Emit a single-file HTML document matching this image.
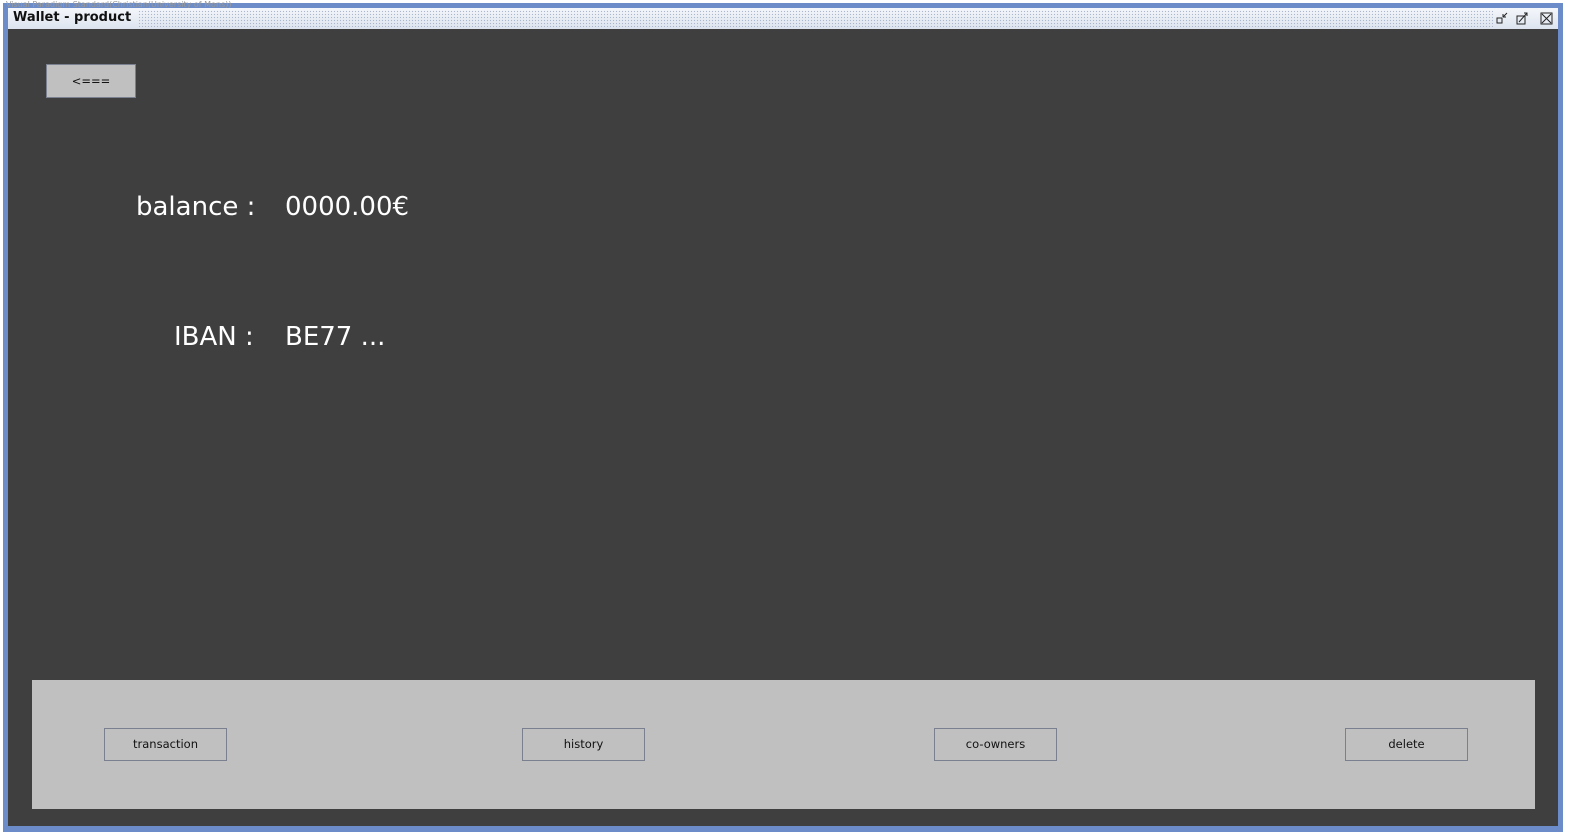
<!DOCTYPE html>
<html><head><style>
*{margin:0;padding:0;box-sizing:border-box}
body{width:1574px;height:839px;background:#fff;position:relative;overflow:hidden;font-family:"DejaVu Sans","Liberation Sans",sans-serif}
.frame{position:absolute;left:3px;top:3px;width:1560px;height:829px;background:#6b8cc8}
.title{position:absolute;left:8px;top:8px;width:1550px;height:21px;background:linear-gradient(#f4f6fa,#dde4ef);}
.dots{position:absolute;left:130px;top:2px;width:1355px;height:17px;background-image:radial-gradient(#aab6cc 0.7px,transparent 0.8px);background-size:3px 3px}
.title span{position:absolute;left:5px;top:2px;font-size:13px;font-weight:bold;color:#111}
.content{position:absolute;left:8px;top:29px;width:1550px;height:797px;background:#3f3f3f}
.btn{position:absolute;background:#c0c0c0;border:1px solid #7a8090;font-size:11.5px;color:#111;text-align:center}
.lbl{position:absolute;color:#fff;font-size:26px}
.panel{position:absolute;left:32px;top:680px;width:1503px;height:129px;background:#c0c0c0}
.tiny{position:absolute;left:6px;top:0;font-size:8px;color:#999}
</style></head><body>
<div class="frame"></div>
<div class="tiny">Visual Paradigm Standard(Christian(University of Mons))</div>
<div class="title"><div class="dots"></div><span>Wallet - product</span>
<svg style="position:absolute;left:1487px;top:2px" width="60" height="17" viewBox="0 0 60 17">
<rect x="2" y="8" width="5" height="5" fill="none" stroke="#222"/><path d="M8 7 L12 3 M8 7h3 M8 7v-3" stroke="#222" fill="none"/>
<rect x="22" y="6" width="8" height="8" fill="none" stroke="#222"/><path d="M24 12 L32 3 M29 3h3v3" stroke="#222" fill="none"/>
<rect x="46" y="3" width="11" height="11" fill="none" stroke="#222"/><path d="M47 4L56 13M56 4L47 13" stroke="#222"/>
</svg></div>
<div class="content"></div>
<div class="btn" style="left:46px;top:64px;width:90px;height:34px;line-height:32px">&lt;===</div>
<div class="lbl" style="left:136px;top:192px">balance :</div>
<div class="lbl" style="left:285px;top:192px">0000.00€</div>
<div class="lbl" style="left:174px;top:322px">IBAN :</div>
<div class="lbl" style="left:285px;top:322px">BE77 ...</div>
<div class="panel"></div>
<div class="btn" style="left:104px;top:728px;width:123px;height:33px;line-height:31px">transaction</div>
<div class="btn" style="left:522px;top:728px;width:123px;height:33px;line-height:31px">history</div>
<div class="btn" style="left:934px;top:728px;width:123px;height:33px;line-height:31px">co-owners</div>
<div class="btn" style="left:1345px;top:728px;width:123px;height:33px;line-height:31px">delete</div>
</body></html>
